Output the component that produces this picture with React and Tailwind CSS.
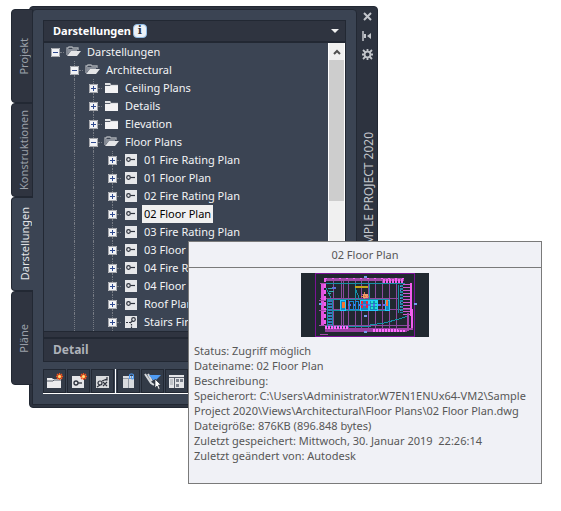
import { useState } from "react";

const TABS = ["Projekt", "Konstruktionen", "Darstellungen", "Pläne"];

const TREE = [
  { depth: 0, icon: "open", label: "Darstellungen" },
  { depth: 1, icon: "open", label: "Architectural" },
  { depth: 2, icon: "closed", label: "Ceiling Plans" },
  { depth: 2, icon: "closed", label: "Details" },
  { depth: 2, icon: "closed", label: "Elevation" },
  { depth: 2, icon: "open", label: "Floor Plans" },
  { depth: 3, icon: "view", label: "01 Fire Rating Plan" },
  { depth: 3, icon: "view", label: "01 Floor Plan" },
  { depth: 3, icon: "view", label: "02 Fire Rating Plan" },
  { depth: 3, icon: "view", label: "02 Floor Plan" },
  { depth: 3, icon: "view", label: "03 Fire Rating Plan" },
  { depth: 3, icon: "view", label: "03 Floor Plan" },
  { depth: 3, icon: "view", label: "04 Fire Rating Plan" },
  { depth: 3, icon: "view", label: "04 Floor Plan" },
  { depth: 3, icon: "view", label: "Roof Plan" },
  { depth: 3, icon: "detail", label: "Stairs Fire Rating Plan" },
];

const DETAILS = [
  "Status: Zugriff möglich",
  "Dateiname: 02 Floor Plan",
  "Beschreibung:",
  "Speicherort: C:\\Users\\Administrator.W7EN1ENUx64-VM2\\Sample Project 2020\\Views\\Architectural\\Floor Plans\\02 Floor Plan.dwg",
  "Dateigröße: 876KB (896.848 bytes)",
  "Zuletzt gespeichert: Mittwoch, 30. Januar 2019\u00a0 22:26:14",
  "Zuletzt geändert von: Autodesk",
];

function NodeIcon({ type }) {
  if (type === "open") {
    return (
      <svg className="mr-[3px] ml-0.5 h-3 w-4 shrink-0" viewBox="0 0 16 12">
        <path d="M1 9V2h1l1-1h3l1 1h5v2" fill="none" stroke="#a9adb4" strokeWidth="1.3" />
        <path d="M2 3h9v2H5L2 8z" fill="#8b919b" />
        <path d="M1 10 5 5h10l-4 5z" fill="#e4e5e7" />
      </svg>
    );
  }
  if (type === "closed") {
    return (
      <svg className="mr-[3px] ml-0.5 h-3 w-4 shrink-0" viewBox="0 0 16 12">
        <path d="M1 1h5l1 1h7v2H1z" fill="#dfe1e4" />
        <path d="M1 4h13v7H1z" fill="#f3f3f5" />
        <path d="M1 3.5h5l1-1h7" fill="none" stroke="#565d6a" />
      </svg>
    );
  }
  return (
    <svg className="mr-[3px] ml-0.5 h-3 w-4 shrink-0" viewBox="0 0 16 12">
      <path d="M2 0h12v12H2z" fill="#e6e7ea" />
      {type === "view" ? (
        <>
          <circle cx="5.5" cy="5.5" r="1.8" fill="none" stroke="#2d323d" strokeWidth="1.2" />
          <path d="M7.5 5.5H12" stroke="#2d323d" strokeWidth="1.2" />
        </>
      ) : (
        <>
          <circle cx="10.500" cy="3.5" r="1.8" fill="none" stroke="#2d323d" strokeWidth="1.2" />
          <path d="M3 6.5h2M6 6.5h1M8.500 8v1.500M8.500 10.500V12M7 7l2.500-2" fill="none" stroke="#2d323d" strokeWidth="1.2" />
        </>
      )}
    </svg>
  );
}

function TreeRow({ node, selected, onSelect }) {
  const expanded = node.icon === "open";
  return (
    <li className="flex h-[18px] items-center pl-[7px] whitespace-nowrap">
      {Array.from({ length: node.depth }, (_, i) => (
        <span key={i} className="mr-2.5 flex h-full w-[9px] justify-center">
          {i > 0 && <span className="w-px border-l border-dotted border-[#767b84]" />}
        </span>
      ))}
      <span className="flex h-full w-[9px] flex-col items-center">
        <span className={node.depth ? "flex-1 border-l border-dotted border-[#767b84]" : "flex-1"} />
        <button aria-label={`${node.label} umschalten`} className="size-[9px] bg-[#f2f3f6]">
          <svg className="size-[9px]" viewBox="0 0 9 9">
            <path d="M.5.5h8v8h-8z" fill="none" stroke="#a5a7ac" />
            <path d={expanded ? "M2 4.5h5" : "M2 4.5h5M4.5 2v5"} stroke="#2f4a8f" />
          </svg>
        </button>
        <span className={node.depth ? "flex-1 border-l border-dotted border-[#767b84]" : "flex-1"} />
      </span>
      <span className="w-1 border-t border-dotted border-[#767b84]" />
      <NodeIcon type={node.icon} />
      <button
        onClick={onSelect}
        className={selected ? "h-[18px] bg-[#f0f0f0] px-0.5 leading-[18px] text-black" : "h-[18px] px-0.5 leading-[18px] text-[#f2f3f5]"}
      >
        {node.label}
      </button>
    </li>
  );
}

function Spark() {
  return (
    <g>
      <path d="M13.5 0v7M10 3.5h7M11 1l5 5M16 1l-5 5" stroke="#f0541e" strokeWidth="1.3" />
      <circle cx="13.5" cy="3.5" r="1.5" fill="#ffe27a" />
    </g>
  );
}

const TOOLS = [
  {
    label: "Kategorie hinzufügen",
    art: (
      <>
        <path d="M1 5h5l1 1h8v9H1z" fill="#ececee" />
        <path d="M1 8h6l1-1h7" fill="none" stroke="#555c68" />
        <Spark />
      </>
    ),
  },
  {
    label: "Neue Ansicht",
    art: (
      <>
        <path d="M2 3h12v12H2z" fill="#e4e5e8" />
        <circle cx="6" cy="10" r="2" fill="none" stroke="#2d323d" strokeWidth="1.3" />
        <path d="M8 10h4" stroke="#2d323d" strokeWidth="1.3" />
        <Spark />
      </>
    ),
  },
  {
    label: "Aktualisieren",
    art: (
      <>
        <path d="M2 3h13v12H2z" fill="#d9dbde" />
        <circle cx="6" cy="10" r="2" fill="none" stroke="#2d323d" strokeWidth="1.2" />
        <path d="M8 8l5-2M13 4v3h-3M9 9l4 4M13 9l-4 4M3 14l3-2" fill="none" stroke="#2d323d" strokeWidth="1.2" />
      </>
    ),
  },
  {
    label: "Anhängen",
    art: (
      <>
        <path d="M3 3h11v12H3z" fill="#d9dbde" />
        <path d="M3 5.500h11M8.500 6v9" stroke="#9298a1" />
        <path d="M9.500 6V2.500q0-1.500 1.500-1.500h1q1.500 0 1.500 1.500V5q0 1-1 1t-1-1V3" fill="none" stroke="#4f9cf5" strokeWidth="1.1" />
      </>
    ),
  },
  {
    label: "Filter",
    art: (
      <>
        <path d="M1 1l6 9 3 2M4 1l4 7" fill="none" stroke="#d6d9dd" strokeWidth="2" />
        <path d="M5 2h12l-5 5H9z" fill="#4f9cf5" />
        <path d="M11 6v9l2-2 1.5 3.5 1.5-.7L14.500 12H17z" fill="#fff" stroke="#2d323d" strokeWidth=".7" />
      </>
    ),
  },
  {
    label: "Eigenschaften",
    art: (
      <>
        <path d="M1 2h15v13H1z" fill="#e4e5e8" />
        <path d="M1 4.500h15M6.500 5v10" stroke="#5a606c" />
        <path d="M8 6h3v3H8zM12 6h3v3h-3zM8 11h3v3H8z" fill="#7a808b" />
        <path d="M2 7h3M2 9h3M2 11h3" stroke="#9aa0a8" />
      </>
    ),
  },
];

function PlanThumbnail() {
  return (
    <svg className="h-16 w-32" viewBox="0 0 128 64" shapeRendering="crispEdges" role="img" aria-label="02 Floor Plan">
      <path d="M0 0h128v64H0z" fill="#212830" />
      <path d="M14.500.5h99v63h-99z" fill="none" stroke="#7a1296" />
      <g stroke="#8b4a9f" fill="none">
        <path d="M32.500 5v50M40.500 5v50M42.500 5v50M47.500 5v50M54.500 5v50M60.500 5v50M67.500 5v50M74.500 5v50M81.500 5v50M88.500 5v50M95.500 5v50" />
        <path d="M19 25.500h78M25 36.500h84M25 52.500h84M60 21.500h8" />
      </g>
      <g stroke="#1590a6" fill="none">
        <path d="M24 10.500h80M26 26.500h62M26 37.500h62M26 53.500h44M54.500 11v15M68.500 11v15M26.500 26v27M31.500 26v27M97.500 12v28" />
        <path d="M24 13l6 12M54 15l5 12M69 52l14-2 15-4 9-3" />
      </g>
      <path d="M24 6.500h79" stroke="#9f4ba7" strokeWidth="3" />
      <path d="M24 5.500h79" stroke="#ff5cff" strokeDasharray="2 5" />
      <path d="M82 8h21" stroke="#f060ef" strokeWidth="4" strokeDasharray="2 1" />
      <path d="M24 57h82" stroke="#983fa1" strokeWidth="4" />
      <path d="M24 54.500h24M72 57.500h32" stroke="#ff6cff" strokeWidth="3" strokeDasharray="2 1" />
      <path d="M21.500 10v43" stroke="#e052de" strokeWidth="3" />
      <path d="M24 5v48" stroke="#f05fed" strokeWidth="2" strokeDasharray="4 2" />
      <path d="M19 10.500h6M18 27.500h7M18 37.500h7M18 52.500h7M19 61.500h8" stroke="#a84bad" />
      <path d="M106 11v31" stroke="#d058d2" strokeWidth="8" strokeDasharray="1 2" />
      <path d="M110 10v33M111 36v19" stroke="#f05fed" strokeWidth="2" />
      <path d="M107 40v18M97 56h15" stroke="#a746ae" strokeWidth="2" />
      <path d="M100 12v28" stroke="#2188a6" strokeWidth="3" strokeDasharray="2 1" />
      <path d="M99.500 13v25" stroke="#7b7ee8" strokeDasharray="1 3" />
      <path d="M29 27v25" stroke="#3977bd" strokeWidth="4" strokeDasharray="2 1" />
      <path d="M28.500 28v23" stroke="#23b1b1" strokeDasharray="1 2" />
      <path d="M27 15.500h6M28 18.500h5M27 20.500h3" stroke="#32aeb2" />
      <path d="M31 15h4" stroke="#5d70db" strokeWidth="2" />
      <path d="M54 13.500h13" stroke="#c5a51c" strokeWidth="2" />
      <path d="M39 27h5v10h-5zM59 27h8v10h-8zM68 27h8v10h-8zM84 27h4v10h-4z" fill="#1686bd" stroke="#23c9ff" />
      <path d="M47 31.500h38" stroke="#5c6cf0" strokeWidth="2" strokeDasharray="3 2" />
      <path d="M48 28h4v8h-4zM54 28h3v8h-3z" fill="none" stroke="#1789d8" />
      <path d="M41 29h3v6h-3zM85 27h2v6h-2z" fill="#f77532" />
      <path d="M61 28v8M66 28v8" stroke="#ed2443" strokeWidth="2" strokeDasharray="3 1" />
      <path d="M71 28v8M75 28v8" stroke="#24e4cd" strokeWidth="2" strokeDasharray="2 1" />
      <path d="M62 21h5v4h-5z" fill="#f0a06a" />
      <path d="M63.500 19v7M60 23.500h9" stroke="#e57452" strokeDasharray="2 1" />
      <path d="M63 43h3M113 31h3M18 31h3M63 4h3M63 59h3" stroke="#769cec" strokeWidth="2" />
    </svg>
  );
}

function Tooltip() {
  return (
    <div
      role="tooltip"
      className="absolute top-[241px] right-[19px] left-[188px] border border-[#7a7a7a] bg-[#f0f1f6] pb-5 text-[#575757]"
    >
      <h2 className="border-b border-[#7a7a7a] text-center leading-[25px]">02 Floor Plan</h2>
      <div className="flex justify-center pt-[5px] pb-[6px]">
        <PlanThumbnail />
      </div>
      <div className="pl-[5px] leading-[15px]">
        {DETAILS.map((line) => (
          <p key={line}>{line}</p>
        ))}
      </div>
    </div>
  );
}

export default function App() {
  const [tab, setTab] = useState("Darstellungen");
  const [selected, setSelected] = useState("02 Floor Plan");

  return (
    <div className="relative min-h-screen bg-white pt-1.5 pr-[183px] pb-4 pl-[11px] font-['Noto_Sans','Open_Sans',sans-serif] text-[11px]">
      <main className="flex items-start">
        <nav className="relative z-10 mt-[3px] -mr-1 flex w-[22px] shrink-0 flex-col">
          {TABS.map((name) => (
            <button
              key={name}
              onClick={() => setTab(name)}
              className={
                name === tab
                  ? "flex h-[94px] items-center justify-center rounded-l-sm border-y border-l border-[#222833] bg-[#3b4453] pl-1 text-[#e4e6e9]"
                  : "flex h-[94px] items-center justify-center rounded-l-sm border border-[#222833] bg-[#2f3440] pl-1 text-[#9ba0a9]"
              }
            >
              <span className="rotate-180 leading-4 [writing-mode:vertical-rl]">{name}</span>
            </button>
          ))}
        </nav>

        <div className="flex min-w-0 flex-1 rounded-sm border border-[#222833] bg-[#2d333f] pt-0.5 pb-0.5 pl-0.5">
          <section className="min-w-0 flex-1 rounded-t-sm border border-[#222833] bg-[#3b4453] p-2.5">
            <div className="border border-[#222833]">
              <button className="flex h-[22px] w-full items-center border-b-2 border-[#222833] bg-[#2f3440] pr-1.5 pl-[9px] font-bold text-white">
                Darstellungen
                <span className="ml-0.5 flex size-3.5 items-center justify-center rounded-sm border border-[#8fbbe6] bg-[#edf1f6] font-['DejaVu_Serif',serif] text-[11px] leading-3 text-[#30343c]">
                  i
                </span>
                <svg className="ml-auto h-1 w-2" viewBox="0 0 8 4">
                  <path d="M0 0h8L4 4z" fill="#f0f0f0" />
                </svg>
              </button>
              <div className="flex">
                <ul className="min-w-0 flex-1 overflow-hidden">
                  {TREE.map((node) => (
                    <TreeRow
                      key={node.label}
                      node={node}
                      selected={node.label === selected}
                      onSelect={() => setSelected(node.label)}
                    />
                  ))}
                </ul>
                <div className="w-[17px] shrink-0 border-x border-white bg-[#f0f0f0]">
                  <button aria-label="Nach oben" className="flex h-[17px] w-full items-center justify-center">
                    <svg className="h-2 w-2" viewBox="0 0 8 8">
                      <path d="M1 6l3-3 3 3" fill="none" stroke="#505050" strokeWidth="2" />
                    </svg>
                  </button>
                  <div className="h-[141px] bg-[#cdcdcd]" />
                </div>
              </div>
              <div className="h-[7px] border-y border-[#222833] bg-[#2f3440]" />
              <h2 className="h-[23px] border-t border-[#222833] bg-[#2f3440] pl-[9px] text-[12px] leading-[22px] font-bold text-[#aeb2b9]">
                Detail
              </h2>
            </div>

            <div className="mt-[7px] flex gap-px overflow-hidden border-b border-white">
              {TOOLS.map((tool, i) => (
                <div key={tool.label} className={i === 2 ? "flex border-r border-white pr-px" : "flex"}>
                  <button
                    aria-label={tool.label}
                    className="flex h-6 w-[23px] items-center justify-center border border-[#222833] bg-[#333b48]"
                  >
                    <svg className="size-[17px]" viewBox="0 0 17 17">
                      {tool.art}
                    </svg>
                  </button>
                </div>
              ))}
            </div>
          </section>

          <aside className="flex w-5 shrink-0 flex-col items-center text-[#c3c6cb]">
            <button aria-label="Schließen" className="mt-0.5 flex h-[19px] items-center pb-2">
              <svg className="size-[9px]" viewBox="0 0 9 9">
                <path d="M1 1l7 7M8 1L1 8" stroke="currentColor" strokeWidth="2" />
              </svg>
            </button>
            <button aria-label="Automatisch ausblenden" className="flex h-[19px] items-center pb-2">
              <svg className="size-[10px]" viewBox="0 0 10 10">
                <path d="M1 0v10" stroke="currentColor" strokeWidth="1.500" />
                <path d="M2 3h2v4H2zM9 2v6L5 5z" fill="currentColor" />
              </svg>
            </button>
            <button aria-label="Eigenschaften" className="flex h-[19px] items-center pb-2">
              <svg className="size-[11px]" viewBox="0 0 11 11">
                <circle cx="5.500" cy="5.500" r="2.900" fill="none" stroke="currentColor" strokeWidth="1.800" />
                <path d="M5.500 0v2.500M5.500 8.500V11M0 5.500h2.500M8.500 5.500H11M1 1l2.500 2.500M7.500 7.500L10 10M10 1L7.500 3.500M3.500 7.500L1 10" stroke="currentColor" strokeWidth="1.800" />
              </svg>
            </button>
            <h1 className="mt-16 rotate-180 pr-[3px] text-[12px] leading-4 font-normal whitespace-nowrap [writing-mode:vertical-rl]">
              SAMPLE PROJECT 2020
            </h1>
          </aside>
        </div>
      </main>

      <Tooltip />
    </div>
  );
}
